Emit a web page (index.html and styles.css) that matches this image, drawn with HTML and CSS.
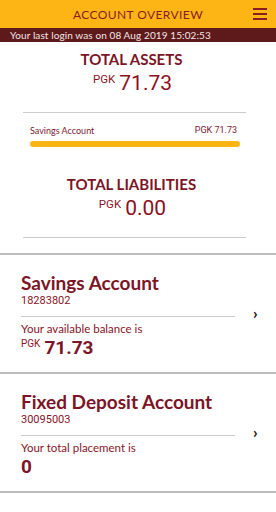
FILE: index.html
```html
<!DOCTYPE html>
<html>
<head>
<title>Account Overview</title>
<link rel="stylesheet" href="styles.css">
</head>
<body>

<div class="topbar">
  <span class="title">ACCOUNT OVERVIEW</span>
  <span class="menu"><i></i><i></i><i></i></span>
</div>
<div class="lastLogin">Your last login was on 08 Aug 2019 15:02:53</div>

<div class="summary">
  <div class="sumHead">TOTAL ASSETS</div>
  <div class="sumAmount"><span class="cur">PGK</span><span class="num">71.73</span></div>
  <div class="sumRule"></div>
  <div class="breakRow"><span>Savings Account</span><span>PGK 71.73</span></div>
  <div class="bar"></div>

  <div class="sumHead liab">TOTAL LIABILITIES</div>
  <div class="sumAmount"><span class="cur">PGK</span><span class="num">0.00</span></div>
  <div class="sumRule"></div>
</div>

<div class="card">
  <div class="cardBody">
    <div class="cardTitle">Savings Account</div>
    <div class="cardNo">18283802</div>
    <div class="cardRule"></div>
    <div class="cardLabel">Your available balance is</div>
    <div class="cardAmount"><span class="cur">PGK</span><span class="num">71.73</span></div>
  </div>
  <div class="chev">&#8250;</div>
</div>

<div class="card">
  <div class="cardBody">
    <div class="cardTitle">Fixed Deposit Account</div>
    <div class="cardNo">30095003</div>
    <div class="cardRule"></div>
    <div class="cardLabel">Your total placement is</div>
    <div class="cardAmount"><span class="num">0</span></div>
  </div>
  <div class="chev">&#8250;</div>
</div>

</body>
</html>
```

FILE: styles.css
```css
body {
  margin: 0;
  background: #FFFFFF;
  font-family: Lato, "Open Sans", sans-serif;
  color: #8A1427;
}
.topbar {
  height: 28px;
  background-color: #FDB515;
  display: flex;
  align-items: center;
  justify-content: center;
  position: relative;
}
.topbar .title {
  font-size: 12px;
  color: #8A1C22;
  letter-spacing: 0.4px;
}
.menu {
  position: absolute;
  right: 9px;
  top: 8px;
  width: 14px;
  display: flex;
  flex-direction: column;
  gap: 3px;
}
.menu i {
  display: block;
  height: 2px;
  background-color: #8A1C22;
}
.lastLogin {
  height: 14px;
  line-height: 14px;
  background-color: #5E1A1B;
  color: #F2E6E6;
  font-size: 10px;
  letter-spacing: 0.1px;
  padding-left: 10px;
}
.summary {
  padding: 8px 30px 15px 23px;
  border-bottom: 2px solid #BDBDBD;
}
.sumHead {
  text-align: center;
  font-size: 15px;
  font-weight: bold;
  line-height: 18px;
  color: #7C1526;
  padding-right: 6px;
}
.sumHead.liab {
  margin-top: 28px;
}
.sumAmount {
  display: flex;
  justify-content: center;
  align-items: flex-start;
  height: 28px;
  margin-top: 4px;
  padding-right: 4px;
}
.cur {
  font-family: Roboto, sans-serif;
  font-size: 11.5px;
  margin-right: 4px;
  margin-top: 0;
}
.sumAmount .num {
  font-family: Roboto, sans-serif;
  font-size: 21px;
  line-height: 22px;
  color: #8A1022;
}
.sumRule {
  margin-top: 12px;
  border-top: 1px solid #CCCCCC;
}
.breakRow {
  display: flex;
  justify-content: space-between;
  font-size: 9px;
  margin: 12px 9px 0 7px;
  color: #7C2030;
}
.breakRow span:last-child {
  font-family: Roboto, sans-serif;
}
.bar {
  height: 6px;
  border-radius: 3px;
  background-color: #FDB515;
  margin: 5px 6px 0 7px;
}
.card {
  display: flex;
  align-items: center;
  height: 117px;
  border-bottom: 2px solid #BDBDBD;
  padding-left: 21px;
}
.cardBody {
  width: 214px;
  margin-top: 2px;
}
.cardTitle {
  font-size: 19px;
  font-weight: bold;
  line-height: 22px;
  color: #7C1526;
}
.cardNo {
  font-family: Roboto, sans-serif;
  font-size: 11px;
  line-height: 13px;
}
.cardRule {
  border-top: 1px solid #CCCCCC;
  margin: 9px 0 5px 0;
}
.cardLabel {
  font-size: 11.5px;
  line-height: 14px;
}
.cardAmount {
  display: flex;
  align-items: flex-start;
  margin-top: 2px;
}
.cardAmount .cur {
  font-size: 10px;
  margin-top: 0;
}
.cardAmount .num {
  font-family: Roboto, sans-serif;
  font-weight: bold;
  font-size: 19px;
  line-height: 20px;
  color: #7C1526;
}
.chev {
  margin-left: 18px;
  font-size: 16px;
  font-weight: bold;
  color: #111111;
  margin-top: -2px;
}
```
